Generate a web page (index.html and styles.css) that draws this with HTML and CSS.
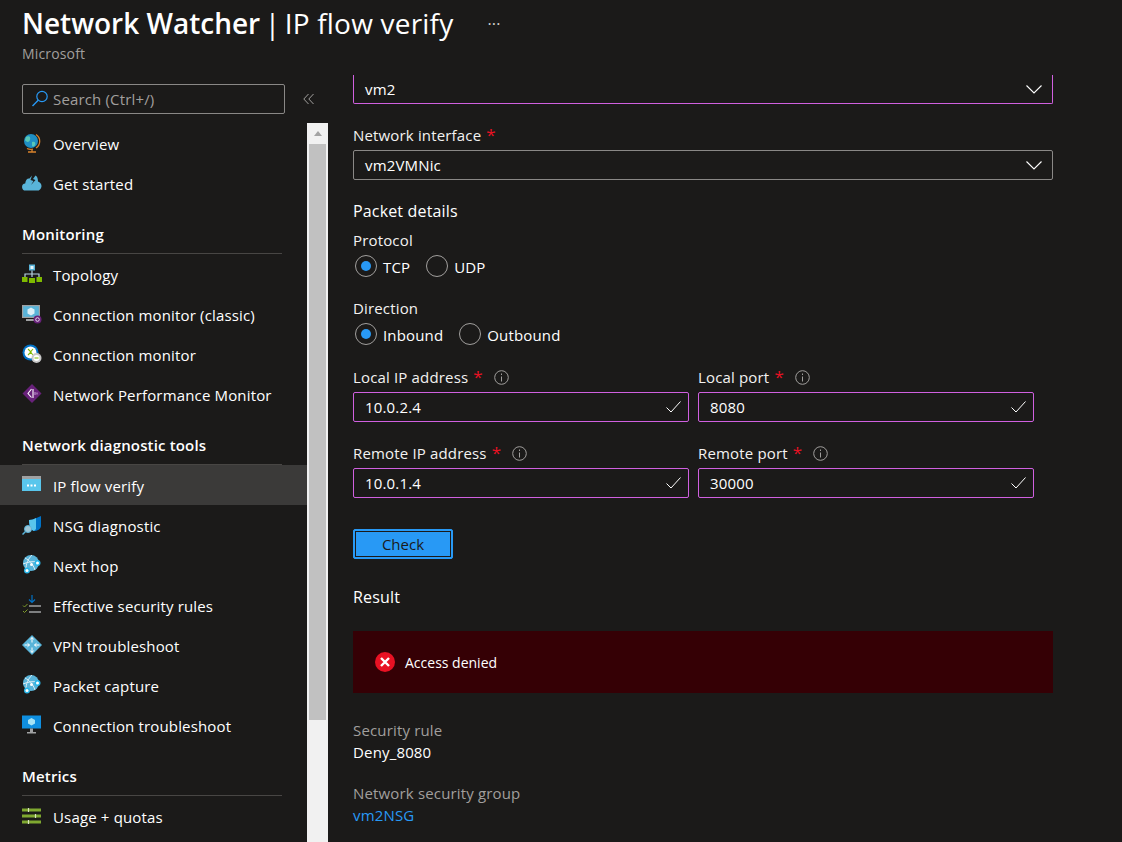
FILE: index.html
```html
<!DOCTYPE html>
<html lang="en">
<head>
  <meta charset="UTF-8">
  <title>Network Watcher | IP flow verify</title>
  <link rel="stylesheet" href="styles.css">
</head>
<body>
  <header class="page-head">
    <div class="title-row">
      <h1 class="title"><b>Network Watcher</b><span class="pipe"> | </span>IP flow verify</h1>
      <span class="more">···</span>
    </div>
    <div class="subtitle">Microsoft</div>
  </header>

  <div class="layout">
    <aside class="side">
      <div class="search-row">
        <div class="search">
          <svg class="search-icon" width="18" height="18" viewBox="0 0 18 18"><circle cx="11" cy="6.500" r="5.200" fill="none" stroke="#2899f5" stroke-width="1.200"/><path d="M7.200 10.300 1.500 16" stroke="#2899f5" stroke-width="1.400"/></svg>
          <span>Search (Ctrl+/)</span>
        </div>
        <svg class="collapse" width="12" height="12" viewBox="0 0 12 12"><path d="M5.500 1 .8 6l4.700 5M10.500 1 5.800 6l4.700 5" fill="none" stroke="#a19f9d" stroke-width="1"/></svg>
      </div>

      <div class="side-body">
        <nav class="nav">
          <a class="item"><svg class="ico" viewBox="0 0 20 20"><circle cx="9" cy="8" r="7" fill="#1f8fc4"/><path d="M4 4c3-2 5 0 4 3S4 9 3 7zM10 9c3-1 4 1 3 3s-3 2-3 0z" fill="#59c8b8"/><path d="M14 1.500a8 8 0 0 1 0 13.500M5 15.500a8 8 0 0 0 6 .5" fill="none" stroke="#d9822b" stroke-width="1.300"/><path d="M10 16v2.500M6 19h8" stroke="#d9822b" stroke-width="1.300"/></svg>Overview</a>
          <a class="item"><svg class="ico" viewBox="0 0 20 20"><path d="M4 17.500a3.500 3.500 0 0 1-.8-7C3.500 7 5.500 5 7.500 5.500L10 2.500 8.500 7l3 1L9 12l4.500-5L11 6l2.500-3.500c1.500.5 2.500 3 2.500 6 2 .5 3.500 2.500 3.500 4.500s-1.500 4.500-3.500 4.500z" fill="#59b4d9"/></svg>Get started</a>

          <h2 class="group">Monitoring</h2>
          <a class="item"><svg class="ico" viewBox="0 0 20 20"><rect x="7" y="0.500" width="6" height="6" fill="#59b4d9"/><rect x="8.500" y="2" width="3" height="3" fill="#e8f4fa"/><path d="M10 6.500V13M3 13v-3h14v3" fill="none" stroke="#b8d4e3" stroke-width="1.200"/><rect y="13" width="5.500" height="5" fill="#7fba00"/><rect x="7" y="14" width="6" height="5" fill="#7fba00"/><rect x="14.500" y="13" width="5.500" height="5" fill="#7fba00"/></svg>Topology</a>
          <a class="item"><svg class="ico" viewBox="0 0 20 20"><rect y="1" width="18" height="13" fill="#a0a1a2"/><rect x="1.200" y="2.200" width="15.600" height="10.600" fill="#59b4d9"/><path d="m9 3.500 3.500 2v4L9 11.500l-3.500-2v-4z" fill="#dceff7"/><rect x="4" y="15" width="9" height="2" fill="#a0a1a2"/><circle cx="15.500" cy="15.500" r="4" fill="#68217a"/><circle cx="15.500" cy="15.500" r="1.800" fill="none" stroke="#fff" stroke-width=".8"/></svg>Connection monitor (classic)</a>
          <a class="item"><svg class="ico" viewBox="0 0 20 20"><circle cx="8.500" cy="8.500" r="8" fill="#0072c6"/><circle cx="8.500" cy="8.500" r="6" fill="#fff"/><path d="m6 5 3 3-3 3M11 5 8.500 8l2.500 3" fill="none" stroke="#7fba00" stroke-width="1.100"/><circle cx="14.500" cy="14" r="5" fill="#c8c8c8"/><circle cx="14.500" cy="14" r="3" fill="#fff"/><path d="M12.500 14h4" stroke="#7fba00" stroke-width="1"/></svg>Connection monitor</a>
          <a class="item"><svg class="ico" viewBox="0 0 20 20"><path d="m10 0 9.500 9.500L10 19 .5 9.500z" fill="#68217a"/><path d="M9.500 5 6 9.500l3.500 4M11 5v9" fill="none" stroke="#fff" stroke-width="1.100"/><path d="M13 8v3M15 8.500v2" stroke="#c9a4d6" stroke-width="1"/></svg>Network Performance Monitor</a>

          <h2 class="group">Network diagnostic tools</h2>
          <a class="item current"><svg class="ico" viewBox="0 0 20 20"><rect y="1" width="19" height="15" fill="#59c6ec"/><rect y="1" width="19" height="3" fill="#a0a1a2"/><path d="M5 9.500h2v2H5zM8.500 9.500h2v2h-2zM12 9.500h2v2h-2z" fill="#fff"/></svg>IP flow verify</a>
          <a class="item"><svg class="ico" viewBox="0 0 20 20"><path d="M7 5c4 0 7-2 12-4v10c0 3-4 5-7 5-3-1-5-5-5-11z" fill="#0072c6"/><path d="M7 5c3 0 5-1 7-2v11l-2 2c-3-1-5-5-5-11z" fill="#59c6ec"/><circle cx="6" cy="14" r="3.500" fill="#a0c8d8" stroke="#59b4d9"/><path d="m3.500 16.500-3 3" stroke="#59b4d9" stroke-width="1.500"/></svg>NSG diagnostic</a>
          <a class="item"><svg class="ico" viewBox="0 0 20 20"><circle cx="9" cy="8" r="8" fill="#59b4d9"/><path d="M3 3c4 2 8 6 10 12M10 0C6 4 4 9 4 14M1 9c5-2 9-3 15-2" fill="none" stroke="#dceff7" stroke-width="1"/><circle cx="15.500" cy="8" r="3" fill="#29b6e8"/><circle cx="5" cy="15.500" r="3" fill="#29b6e8"/><circle cx="15.500" cy="8" r="1.500" fill="#fff"/><circle cx="5" cy="15.500" r="1.500" fill="#fff"/><circle cx="9.500" cy="9.500" r="1.500" fill="#fff"/></svg>Next hop</a>
          <a class="item"><svg class="ico" viewBox="0 0 20 20"><path d="M10 0v7M7 4.500 10 7.500 13 4.500" fill="none" stroke="#0072c6" stroke-width="1.200"/><path d="M7 11h12M7 17h12" stroke="#a0a1a2" stroke-width="1.500"/><path d="m1 10.500 1.500 1.500 3-3M1 16l1.500 1.500 3-3" fill="none" stroke="#7f9c2a" stroke-width="1"/></svg>Effective security rules</a>
          <a class="item"><svg class="ico" viewBox="0 0 20 20"><path d="M10 0 20 10 10 20 0 10z" fill="#59b4d9"/><path d="M10 2.500v5M8.300 4.500 10 2.500l1.700 2M10 12.500v5M8.300 15.500 10 17.500l1.700-2M2.500 10h5M5.500 8.300 7.500 10l-2 1.700M12.500 10h5M14.500 8.300 12.500 10l2 1.700" fill="none" stroke="#fff" stroke-width="1"/></svg>VPN troubleshoot</a>
          <a class="item"><svg class="ico" viewBox="0 0 20 20"><circle cx="9" cy="8" r="8" fill="#59b4d9"/><path d="M3 3c4 2 8 6 10 12M10 0C6 4 4 9 4 14M1 9c5-2 9-3 15-2" fill="none" stroke="#dceff7" stroke-width="1"/><circle cx="15.500" cy="8" r="3" fill="#29b6e8"/><circle cx="5" cy="15.500" r="3" fill="#29b6e8"/><circle cx="15.500" cy="8" r="1.500" fill="#fff"/><circle cx="5" cy="15.500" r="1.500" fill="#fff"/><circle cx="9.500" cy="9.500" r="1.500" fill="#fff"/></svg>Packet capture</a>
          <a class="item"><svg class="ico" viewBox="0 0 20 20"><rect y="0.500" width="19" height="13" fill="#0f8fe0"/><path d="m9.500 3 3.500 2v3.500l-3.500 2-3.500-2V5z" fill="#a6e3f5"/><path d="M8 13.500h3V17H8zM5 17h9v1.500H5z" fill="#a0a1a2"/></svg>Connection troubleshoot</a>

          <h2 class="group">Metrics</h2>
          <a class="item"><svg class="ico" viewBox="0 0 20 20"><path d="M0 4h19M0 10h19M0 16h19" stroke="#7fa830" stroke-width="2.800"/><path d="M6.500 2v4M13.500 8v4M6.500 14v4" stroke="#d8e4c0" stroke-width="1.200"/></svg>Usage + quotas</a>
        </nav>

        <div class="scrollbar">
          <div class="scroll-btn"><span class="scroll-arrow"></span></div>
          <div class="scroll-thumb"></div>
        </div>
      </div>
    </aside>

    <main class="main">
      <div class="select cut valid"><span>vm2</span><svg class="chev" width="16" height="9" viewBox="0 0 16 9"><path d="m.5.5 7.500 7.500L15.500.5" fill="none" stroke="#fff" stroke-width="1.100"/></svg></div>

      <label class="lbl lbl-nic">Network interface <i class="req">*</i></label>
      <div class="select"><span>vm2VMNic</span><svg class="chev" width="16" height="9" viewBox="0 0 16 9"><path d="m.5.5 7.500 7.500L15.500.5" fill="none" stroke="#fff" stroke-width="1.100"/></svg></div>

      <h3 class="section packet">Packet details</h3>

      <div class="lbl lbl-proto">Protocol</div>
      <div class="radios">
        <span class="radio on"></span><span class="radio-text">TCP</span>
        <span class="radio"></span><span class="radio-text">UDP</span>
      </div>

      <div class="lbl lbl-dir">Direction</div>
      <div class="radios">
        <span class="radio on"></span><span class="radio-text">Inbound</span>
        <span class="radio"></span><span class="radio-text">Outbound</span>
      </div>

      <div class="fields">
        <div class="field">
          <label class="lbl">Local IP address <i class="req">*</i><svg class="info" width="15" height="15" viewBox="0 0 15 15"><circle cx="7.500" cy="7.500" r="6.800" fill="none" stroke="#a19f9d"/><path d="M7.500 6.500v5M7.500 3.500v1.500" stroke="#a19f9d"/></svg></label>
          <div class="input"><span>10.0.2.4</span><svg class="tick" width="15" height="12" viewBox="0 0 15 12"><path d="m.5 6.500 4.500 4.500L14.500.5" fill="none" stroke="#fff" stroke-width="1"/></svg></div>
        </div>
        <div class="field">
          <label class="lbl">Local port <i class="req">*</i><svg class="info" width="15" height="15" viewBox="0 0 15 15"><circle cx="7.500" cy="7.500" r="6.800" fill="none" stroke="#a19f9d"/><path d="M7.500 6.500v5M7.500 3.500v1.500" stroke="#a19f9d"/></svg></label>
          <div class="input"><span>8080</span><svg class="tick" width="15" height="12" viewBox="0 0 15 12"><path d="m.5 6.500 4.500 4.500L14.500.5" fill="none" stroke="#fff" stroke-width="1"/></svg></div>
        </div>
        <div class="field">
          <label class="lbl">Remote IP address <i class="req">*</i><svg class="info" width="15" height="15" viewBox="0 0 15 15"><circle cx="7.500" cy="7.500" r="6.800" fill="none" stroke="#a19f9d"/><path d="M7.500 6.500v5M7.500 3.500v1.500" stroke="#a19f9d"/></svg></label>
          <div class="input"><span>10.0.1.4</span><svg class="tick" width="15" height="12" viewBox="0 0 15 12"><path d="m.5 6.500 4.500 4.500L14.500.5" fill="none" stroke="#fff" stroke-width="1"/></svg></div>
        </div>
        <div class="field">
          <label class="lbl">Remote port <i class="req">*</i><svg class="info" width="15" height="15" viewBox="0 0 15 15"><circle cx="7.500" cy="7.500" r="6.800" fill="none" stroke="#a19f9d"/><path d="M7.500 6.500v5M7.500 3.500v1.500" stroke="#a19f9d"/></svg></label>
          <div class="input"><span>30000</span><svg class="tick" width="15" height="12" viewBox="0 0 15 12"><path d="m.5 6.500 4.500 4.500L14.500.5" fill="none" stroke="#fff" stroke-width="1"/></svg></div>
        </div>
      </div>

      <button class="check">Check</button>

      <h3 class="section result">Result</h3>

      <div class="banner">
        <svg width="20" height="20" viewBox="0 0 20 20"><circle cx="10" cy="10" r="10" fill="#e81123"/><path d="m6 6 8 8M14 6l-8 8" stroke="#fff" stroke-width="2.400"/></svg>
        <span>Access denied</span>
      </div>

      <div class="kv">
        <div class="k">Security rule</div>
        <div class="v">Deny_8080</div>
      </div>
      <div class="kv">
        <div class="k">Network security group</div>
        <a class="link">vm2NSG</a>
      </div>
    </main>
  </div>
</body>
</html>
```

FILE: styles.css
```css
html, body { height: 100%; }
body { margin: 0; height: 842px; overflow: hidden; background: #1b1a19; color: #fff; font-family: "Open Sans", "Noto Sans", sans-serif; font-size: 15px; letter-spacing: 0.16px; }

.page-head { height: 73px; padding-left: 22px; box-sizing: border-box; }
.title-row { display: flex; align-items: center; height: 47px; }
.title { margin: 0; font-size: 28px; font-weight: 400; line-height: 47px; letter-spacing: 0.2px; white-space: pre; }
.title b { font-weight: 600; letter-spacing: 0; }
.pipe { word-spacing: -3px; }
.more { margin-left: 34px; font-size: 16px; color: #d2d0ce; }
.subtitle { font-size: 14px; line-height: 18px; color: #a19f9d; margin-top: -2px; }

.layout { display: flex; height: 769px; }
.side { width: 328px; flex: none; display: flex; flex-direction: column; }
.search-row { height: 50px; display: flex; align-items: flex-start; padding: 11px 0 0 22px; box-sizing: border-box; }
.search { width: 263px; height: 30px; box-sizing: border-box; border: 1px solid #8a8886; border-radius: 2px; display: flex; align-items: center; padding-left: 8px; color: #a19f9d; }
.search-icon { margin-right: 4px; }
.collapse { margin: 9px 0 0 18px; }

.side-body { flex: 1; display: flex; min-height: 0; }
.nav { width: 307px; flex: none; }
.item { display: flex; align-items: center; height: 40px; box-sizing: border-box; padding: 2px 0 0 22px; color: #fff; white-space: nowrap; }
.item.current { background: #3b3a39; }
.ico { width: 20px; height: 20px; margin-right: 11px; flex: none; position: relative; top: -1px; }
.group { margin: 12px 25px 0 22px; height: 39px; line-height: 38px; font-size: 15px; font-weight: 600; border-bottom: 1px solid #484644; box-sizing: border-box; }

.scrollbar { width: 21px; flex: none; background: #f1f1f1; display: flex; flex-direction: column; align-items: center; margin-bottom: -10px; }
.scroll-btn { width: 100%; height: 21px; display: flex; justify-content: center; align-items: center; }
.scroll-arrow { width: 0; height: 0; border: 4.500px solid transparent; border-top: 0; border-bottom: 5px solid #a3a3a3; }
.scroll-thumb { width: 17px; height: 576px; background: #c1c1c1; }

.main { flex: 1; padding-left: 25px; min-width: 0; }
.lbl { display: block; line-height: 20px; color: #f3f2f1; white-space: nowrap; }
.req { color: #e81123; font-style: normal; font-size: 17px; line-height: 0; margin-left: 1px; }
.info { margin-left: 11px; vertical-align: -2px; }

.select { width: 700px; height: 30px; box-sizing: border-box; border: 1px solid #8a8886; border-radius: 2px; display: flex; align-items: center; justify-content: space-between; padding: 0 10px 0 11px; }
.select.cut { height: 29px; margin-top: 2px; padding-top: 0; border-top: 0; border-radius: 0 0 2px 2px; }
.select.valid { border-color: #d060e0; }
.lbl-nic { margin-top: 21px; margin-bottom: 5px; }

.section { margin: 0; font-weight: 400; font-size: 16px; line-height: 22px; }
.packet { margin-top: 20px; }
.lbl-proto { margin-top: 8px; }
.lbl-dir { margin-top: 19px; margin-bottom: 1px; }

.radios { display: flex; align-items: center; height: 26px; margin-top: 3px; padding-left: 2px; }
.radio { width: 22px; height: 22px; box-sizing: border-box; border: 1px solid #a19f9d; border-radius: 50%; flex: none; display: flex; align-items: center; justify-content: center; }
.radio.on::after { content: ""; width: 10px; height: 10px; border-radius: 50%; background: #2899f5; }
.radio-text { margin: 0 16px 0 6px; padding-top: 2px; }

.fields { display: grid; grid-template-columns: 336px 336px; column-gap: 9px; row-gap: 21px; margin-top: 20px; }
.field .lbl { margin-bottom: 5px; }
.input { height: 30px; box-sizing: border-box; border: 1px solid #d060e0; border-radius: 2px; display: flex; align-items: center; justify-content: space-between; padding: 0 7px 0 11px; }

.check { display: block; width: 100px; height: 30px; margin-top: 31px; padding: 0; background: #2899f5; border: 1px solid #2899f5; border-radius: 2px; outline: 1px solid #1b1a19; outline-offset: -3px; color: #1b1a19; font: inherit; }

.result { margin-top: 27px; }
.banner { width: 700px; height: 62px; margin-top: 23px; background: #350005; display: flex; align-items: center; padding-left: 22px; box-sizing: border-box; gap: 10px; font-size: 14px; letter-spacing: 0; }

.kv { line-height: 22px; }
.banner + .kv { margin-top: 26px; }
.kv + .kv { margin-top: 19px; }
.k { color: #a19f9d; }
.v { color: #fff; }
.link { color: #2899f5; }
```
